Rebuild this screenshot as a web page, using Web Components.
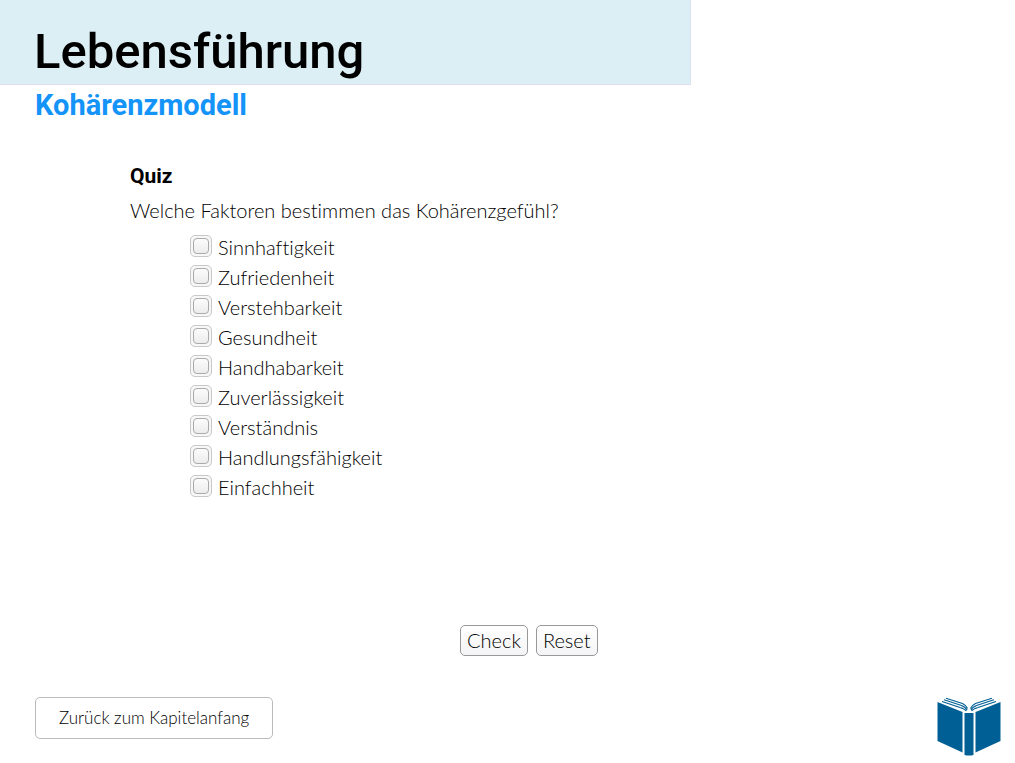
<!DOCTYPE html>
<html lang="de">
<head>
<meta charset="utf-8">
<meta name="viewport" content="width=device-width, initial-scale=1">
<title>Lebensführung – Kohärenzmodell</title>
<style>
  html, body { margin: 0; background: #fff; }
  body { font: 300 20px/30px Lato, "Open Sans", sans-serif; font-variant-ligatures: none; color: #000; }
</style>
</head>
<body>
<lesson-page>
  <page-banner slot="header">Lebensführung<span slot="topic">Kohärenzmodell</span></page-banner>
  <quiz-card>
    <span slot="title">Quiz</span>
    <span slot="question">Welche Faktoren bestimmen das Kohärenzgefühl?</span>
    <quiz-option>Sinnhaftigkeit</quiz-option>
    <quiz-option>Zufriedenheit</quiz-option>
    <quiz-option>Verstehbarkeit</quiz-option>
    <quiz-option>Gesundheit</quiz-option>
    <quiz-option>Handhabarkeit</quiz-option>
    <quiz-option>Zuverlässigkeit</quiz-option>
    <quiz-option>Verständnis</quiz-option>
    <quiz-option>Handlungsfähigkeit</quiz-option>
    <quiz-option>Einfachheit</quiz-option>
    <push-button slot="actions">Check</push-button>
    <push-button slot="actions">Reset</push-button>
  </quiz-card>
  <push-button slot="footer" size="large">Zurück zum Kapitelanfang</push-button>
  <book-link slot="footer"></book-link>
</lesson-page>

<script>
class BaseElement extends HTMLElement {
  constructor() {
    super();
    const template = document.createElement('template');
    template.innerHTML = this.constructor.markup;
    this.attachShadow({ mode: 'open' }).append(template.content.cloneNode(true));
  }
}

customElements.define('lesson-page', class extends BaseElement {
  static markup = `
    <style>
      :host { display: flex; flex-direction: column; min-height: 100vh; box-sizing: border-box; }
      main { padding: 39px 35px 0 130px; }
      footer { display: flex; justify-content: space-between; align-items: flex-start;
        margin-top: auto; padding: 32px 14px 6px 35px; }
    </style>
    <slot name="header"></slot>
    <main><slot></slot></main>
    <footer><slot name="footer"></slot></footer>`;
});

customElements.define('page-banner', class extends BaseElement {
  static markup = `
    <style>
      :host { display: block; font-family: Roboto, sans-serif; }
      h1, h2 { margin: 0; }
      h1 { box-sizing: border-box; width: 68.1%; padding: 22px 0 2px 34px;
        background: #dceff5; border: solid #dcdff0; border-width: 0 1px 1px 0;
        font-size: 49px; font-weight: 500; line-height: 60px; }
      h2 { padding: 0 35px; color: #1493f8; font-size: 29px; font-weight: 700; line-height: 40px; }
    </style>
    <header>
      <h1><slot></slot></h1>
      <h2><slot name="topic"></slot></h2>
    </header>`;
});

customElements.define('quiz-card', class extends BaseElement {
  static markup = `
    <style>
      :host { display: block; }
      form { display: grid; }
      h3 { margin: 0 0 7px; font: 700 21px/24px Roboto, sans-serif; }
      p { margin: 0 0 7px; }
      fieldset { margin: 0; padding: 0 0 0 60px; border: 0; min-width: 0; }
      .actions { display: flex; gap: 8px; padding: 123px 0 0 330px; }
    </style>
    <form>
      <h3><slot name="title"></slot></h3>
      <p id="question"><slot name="question"></slot></p>
      <fieldset aria-labelledby="question"><slot></slot></fieldset>
      <div class="actions"><slot name="actions"></slot></div>
    </form>`;
});

customElements.define('quiz-option', class extends BaseElement {
  static markup = `
    <style>
      :host { display: flex; }
      label { display: flex; gap: 6px; align-items: flex-start; line-height: 30px; }
      input { appearance: none; box-sizing: border-box; flex: none; margin: 3px 0 0;
        width: 22px; height: 22px; padding: 2px; border: 1px solid #c8c8c8; border-radius: 5px;
        background: #f7f7f7; display: grid; }
      input::before { content: ""; border: 1px solid #aaa; border-radius: 4px;
        background: linear-gradient(#fcfcfc, #ececec); }
      input:checked::before { background: #1493f8; }
    </style>
    <label for="choice"><input type="checkbox" id="choice"><span><slot></slot></span></label>`;
});

customElements.define('push-button', class extends BaseElement {
  static markup = `
    <style>
      :host { display: block; }
      button { display: block; box-sizing: border-box; margin: 0; padding: 0 6px; height: 31px;
        border: 1px solid #989898; border-radius: 5px; background: linear-gradient(#fff, #f4f4f6);
        color: inherit; font: inherit; font-variant-ligatures: none; line-height: 29px; }
      :host([size="large"]) button { height: 42px; padding: 0 23px; border-color: #bbb;
        background: #fff; font-size: 17px; line-height: 40px; }
    </style>
    <button type="button"><slot></slot></button>`;
});

customElements.define('book-link', class extends BaseElement {
  static markup = `
    <style>
      :host { display: block; }
      a, svg { display: block; }
    </style>
    <a href="#inhalt" aria-label="Inhalt">
      <svg width="64" height="60" viewBox="0 0 64 60" fill="#005f94">
        <path d="M.5 5 25.500 15V55.500L.5 44ZM63.500 5 38.500 15V55.500L63.500 44ZM27.500 16H36.500V58Q32 59 27.500 58Z"/>
        <g fill="none" stroke="#005f94" stroke-width="1.200">
          <path d="M5 4.500 23 10.500Q28 12 29.500 14"/>
          <path d="M7 2.800 24.500 8.500Q29 10.500 30 13"/>
          <path d="M9 1.200 25.500 6.500Q29.500 8.500 30.500 11.500"/>
          <path d="M59 4.500 41 10.500Q36 12 34.500 14"/>
          <path d="M57 2.800 39.500 8.500Q35 10.500 34 13"/>
          <path d="M55 1.200 38.500 6.500Q34.500 8.500 33.500 11.500"/>
        </g>
      </svg>
    </a>`;
});
</script>
</body>
</html>
